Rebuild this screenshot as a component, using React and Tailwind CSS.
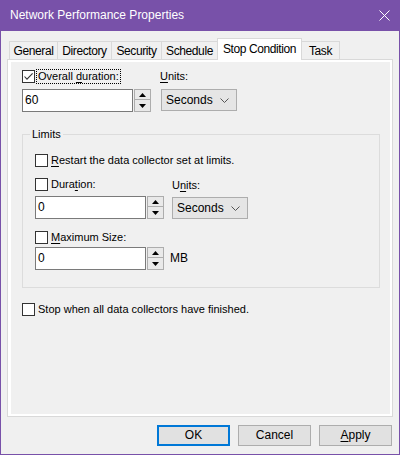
import React from 'react';

// Windows-style property sheet: "Stop Condition" page of a data collector set
const Check = ({ checked }) => (
  <span className="w-[13px] h-[13px] border border-[#333333] bg-white flex items-center justify-center shrink-0">
    {checked && (
      <svg width="11" height="11" viewBox="0 0 11 11">
        <path d="M1.5 5.5 L4 8.2 L9.6 2.4" fill="none" stroke="#333333" strokeWidth="1.1" />
      </svg>
    )}
  </span>
);

const Spinner = () => (
  <div className="ml-px flex flex-col w-[17px] h-[23px]">
    <div className="h-[11px] border border-[#ADADAD] bg-[#E9E9E9] flex items-center justify-center">
      <svg width="7" height="4" viewBox="0 0 7 4"><path d="M3.5 0 L7 4 L0 4Z" fill="#000" /></svg>
    </div>
    <div className="h-[12px] border border-t-0 border-[#ADADAD] bg-[#E9E9E9] flex items-center justify-center">
      <svg width="7" height="4" viewBox="0 0 7 4"><path d="M0 0 L7 0 L3.5 4Z" fill="#000" /></svg>
    </div>
  </div>
);

const NumberField = ({ value }) => (
  <div className="flex">
    <div className="w-[111px] h-[23px] border border-[#7A7A7A] bg-white pl-[2px] pt-[3px] text-[12px]">{value}</div>
    <Spinner />
  </div>
);

const Combo = ({ className = '' }) => (
  <div className={`w-[76px] h-[22px] border border-[#ADADAD] bg-[#E5E5E5] flex items-center justify-between pl-[4px] pr-[7px] text-[12px] ${className}`}>
    <span>Seconds</span>
    <svg width="9" height="5" viewBox="0 0 9 5"><path d="M0.5 0.5 L4.5 4.5 L8.5 0.5" fill="none" stroke="#555" strokeWidth="1" /></svg>
  </div>
);

const U = ({ children }) => <span className="underline underline-offset-2">{children}</span>;

const tabs = [
  { name: 'General', w: 'w-[49px]' },
  { name: 'Directory', w: 'w-[55px]' },
  { name: 'Security', w: 'w-[51px]' },
  { name: 'Schedule', w: 'w-[57px]' },
  { name: 'Stop Condition', w: 'w-[85px]', active: true },
  { name: 'Task', w: 'w-[39px]' },
];

export default function App() {
  return (
    <div className="w-[400px] h-[455px] flex flex-col bg-[#F0F0F0] border-x border-b border-[#7851A9] text-[11px] leading-[15px] text-black font-['Liberation_Sans',Arial,sans-serif]">
      {/* title bar */}
      <div className="h-[31px] -mx-px bg-[#7851A9] flex items-center justify-between pl-[10px] pr-[10px] text-white text-[12px] shrink-0">
        <span>Network Performance Properties</span>
        <svg width="11" height="11" viewBox="0 0 11 11">
          <path d="M0.5 0.5 L10.5 10.5 M10.5 0.5 L0.5 10.5" stroke="#fff" strokeWidth="1" />
        </svg>
      </div>

      {/* tab strip */}
      <div className="mt-[7px] ml-[8px] h-[21px] flex items-end relative z-10 text-[12px]">
        {tabs.map((t, i) =>
          t.active ? (
            <div key={t.name} className={`${t.w} ${i ? '-ml-px' : ''} h-[22px] -mb-px border border-b-0 border-[#D9D9D9] bg-white flex justify-center pt-[3px] tracking-[-0.4px]`}>
              {t.name}
            </div>
          ) : (
            <div key={t.name} className={`${t.w} ${i ? '-ml-px' : ''} h-[18px] border border-b-0 border-[#D9D9D9] bg-[#F0F0F0] flex justify-center pt-[2px] tracking-[-0.4px]`}>
              {t.name}
            </div>
          )
        )}
      </div>

      {/* page */}
      <div className="mx-[6px] h-[358px] border border-[#D9D9D9] bg-white pt-[2px] pr-[2px] pb-[2px] pl-[3px] shrink-0">
        <div className="h-full bg-[#F0F0F0] pl-[11px] pt-[7px]">
          <div className="h-[15px] flex items-center">
            <div className="w-[138px] flex items-center">
              <Check checked />
              <span className="ml-px px-px border border-dotted border-black h-[15px] leading-[13px]">
                Overall <U>d</U>uration:
              </span>
            </div>
            <span><U>U</U>nits:</span>
          </div>
          <div className="mt-[5px] flex items-start">
            <NumberField value="60" />
            <Combo className="ml-[10px]" />
          </div>

          {/* limits group */}
          <div className="relative mt-[22px] w-[358px] border border-[#DCDCDC] pl-[12px] pt-[18px] pb-[17px]">
            <span className="absolute -top-[8px] left-[7px] px-[2px] bg-[#F0F0F0]">Limits</span>
            <div className="h-[15px] flex items-center">
              <Check />
              <span className="ml-[3px]"><U>R</U>estart the data collector set at limits.</span>
            </div>
            <div className="mt-[9px] h-[15px] flex items-center">
              <div className="w-[137px] flex items-center">
                <Check />
                <span className="ml-[3px]">Dura<U>t</U>ion:</span>
              </div>
              <span className="pt-[2px]">U<U>n</U>its:</span>
            </div>
            <div className="mt-[4px] flex items-start">
              <NumberField value="0" />
              <Combo className="ml-[8px] mt-px" />
            </div>
            <div className="mt-[11px] h-[15px] flex items-center">
              <Check />
              <span className="ml-[3px]"><U>M</U>aximum Size:</span>
            </div>
            <div className="mt-[2px] flex items-center">
              <NumberField value="0" />
              <span className="ml-[6px] text-[12px]">MB</span>
            </div>
          </div>

          <div className="mt-[14px] h-[15px] flex items-center">
            <Check />
            <span className="ml-[3px]">Stop when all data collectors have finished.</span>
          </div>
        </div>
      </div>

      {/* dialog buttons */}
      <div className="mt-[8px] mr-[7px] flex justify-end gap-[8px] text-[12px]">
        <button className="w-[73px] h-[21px] border-2 border-[#0078D7] bg-[#E1E1E1]">OK</button>
        <button className="w-[73px] h-[21px] border border-[#ADADAD] bg-[#E1E1E1]">Cancel</button>
        <button className="w-[73px] h-[21px] border border-[#ADADAD] bg-[#E1E1E1]"><U>A</U>pply</button>
      </div>
    </div>
  );
}
